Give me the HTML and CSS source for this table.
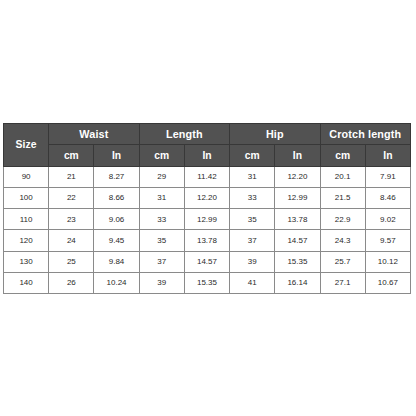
FILE: index.html
```html
<!DOCTYPE html>
<html>
<head>
<meta charset="utf-8">
<link rel="stylesheet" href="styles.css">
</head>
<body>
<div class="page">
<table class="sizes">
<thead>
<tr class="h1">
<th rowspan="2" class="size">Size</th>
<th colspan="2">Waist</th>
<th colspan="2">Length</th>
<th colspan="2">Hip</th>
<th colspan="2">Crotch length</th>
</tr>
<tr class="h2">
<th>cm</th><th>In</th><th>cm</th><th>In</th><th>cm</th><th>In</th><th>cm</th><th>In</th>
</tr>
</thead>
<tbody>
<tr><td>90</td><td>21</td><td>8.27</td><td>29</td><td>11.42</td><td>31</td><td>12.20</td><td>20.1</td><td>7.91</td></tr>
<tr><td>100</td><td>22</td><td>8.66</td><td>31</td><td>12.20</td><td>33</td><td>12.99</td><td>21.5</td><td>8.46</td></tr>
<tr><td>110</td><td>23</td><td>9.06</td><td>33</td><td>12.99</td><td>35</td><td>13.78</td><td>22.9</td><td>9.02</td></tr>
<tr><td>120</td><td>24</td><td>9.45</td><td>35</td><td>13.78</td><td>37</td><td>14.57</td><td>24.3</td><td>9.57</td></tr>
<tr><td>130</td><td>25</td><td>9.84</td><td>37</td><td>14.57</td><td>39</td><td>15.35</td><td>25.7</td><td>10.12</td></tr>
<tr><td>140</td><td>26</td><td>10.24</td><td>39</td><td>15.35</td><td>41</td><td>16.14</td><td>27.1</td><td>10.67</td></tr>
</tbody>
</table>
</div>
</body>
</html>
```
FILE: styles.css
```css
html, body {
  margin: 0;
  padding: 0;
  background: #ffffff;
}
.page {
  width: 416px;
  height: 416px;
  padding: 123px 0 0 3px;
  box-sizing: border-box;
}
.sizes {
  border-collapse: collapse;
  table-layout: fixed;
  width: 408px;
  font-family: "Liberation Sans", Arial, sans-serif;
  border: 1px solid #6a6a6a;
}
.sizes th, .sizes td {
  padding: 0;
  text-align: center;
  vertical-align: middle;
  height: 21.25px;
  box-sizing: border-box;
}
.sizes th {
  background: #525252;
  color: #ffffff;
  font-weight: bold;
  border: 1px solid #383838;
}
.h1 th {
  font-size: 10.8px;
  letter-spacing: 0.15px;
}
.h1 th.size {
  font-size: 10.4px;
}
.h2 th {
  font-size: 10.3px;
}
.sizes td {
  font-size: 8px;
  color: #2a2a2a;
  border: 1px solid #8a8a8a;
}
```
